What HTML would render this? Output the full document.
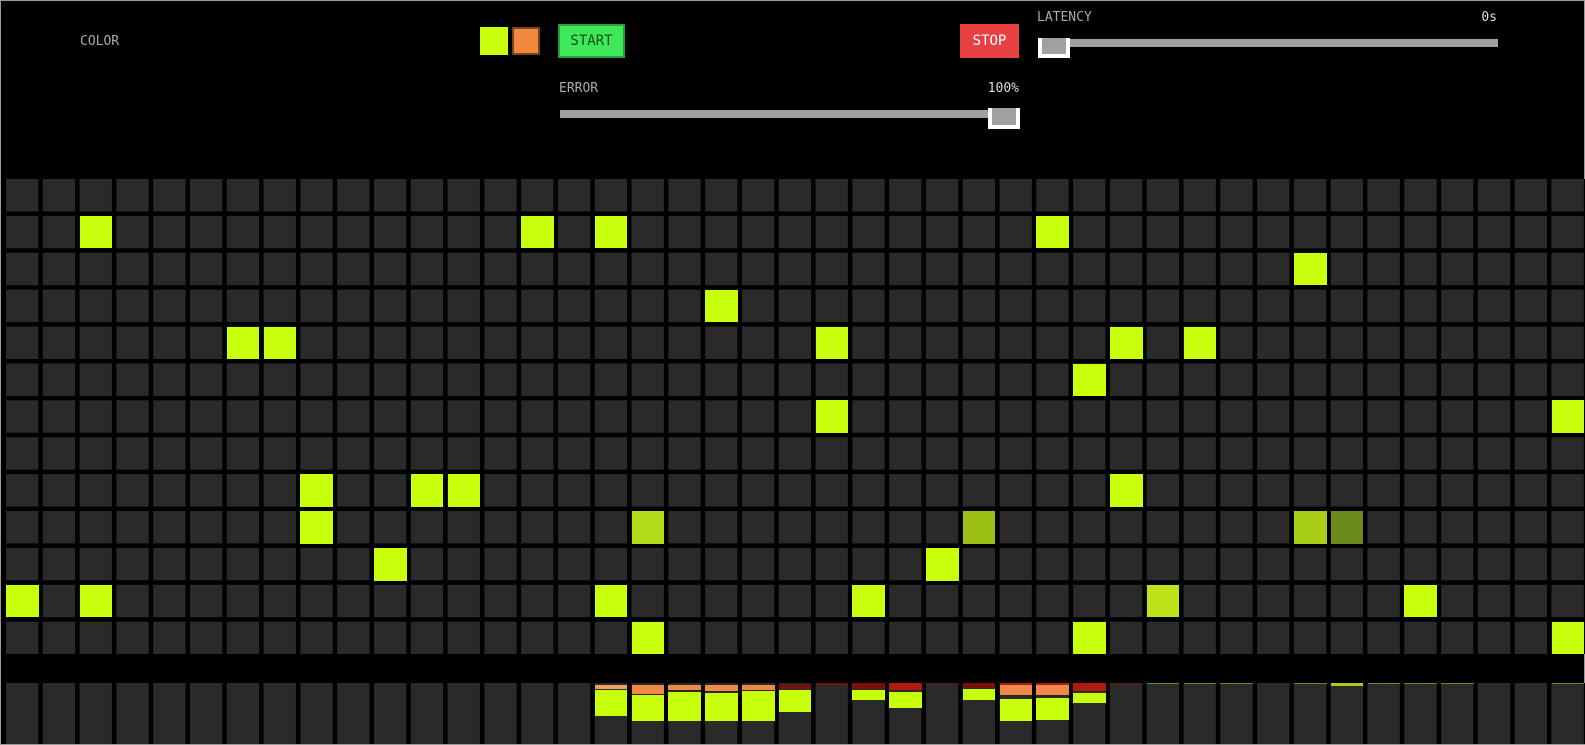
<!DOCTYPE html>
<html><head><meta charset="utf-8"><style>
*{margin:0;padding:0;box-sizing:border-box}
html,body{width:1585px;height:745px;background:#000;overflow:hidden}
body{position:relative;border:1px solid #9a9a9a;font-family:"DejaVu Sans Mono","Liberation Mono",monospace;font-size:13px;color:#aaa}
.t{position:absolute;line-height:14px}
.grid{position:absolute;left:5px;top:178px;width:1582px;height:475px;background-color:#2a2a2a;
background-image:linear-gradient(to right,transparent 32.5px,#000 32.5px),linear-gradient(to bottom,transparent 32.5px,#000 32.5px);
background-size:36.8px 100%,100% 36.9px}
.bars{position:absolute;left:5px;top:682px;width:1582px;height:61px;background-color:#2a2a2a;
background-image:linear-gradient(to right,transparent 32.5px,#000 32.5px);background-size:36.8px 100%}
.l{position:absolute;width:32.5px;height:32.5px;background:#c8ff0a;left:calc(5px + var(--c)*36.8px);top:calc(178px + var(--r)*36.9px)}
.b{position:absolute;width:32.5px;left:calc(5px + var(--c)*36.8px)}
.lm{background:#c8ff0a}.or{background:#f0884a}.ol{background:#f0a060}.dr{background:#7a1008}.rd{background:#b01a10}
</style></head><body>
<div class="t" style="left:79px;top:34px">COLOR</div>
<div style="position:absolute;left:479px;top:26px;width:28px;height:28px;background:#c8ff0a"></div>
<div style="position:absolute;left:511px;top:26px;width:28px;height:28px;background:#f0883e;border:2px solid #7a4020"></div>
<div style="position:absolute;left:557px;top:23px;width:67px;height:34px;background:#3ee85a;border:2px solid #27a040;color:#0d4d1a;text-align:center;line-height:30px;font-size:14px">START</div>
<div style="position:absolute;left:959px;top:23px;width:59px;height:34px;background:#e84040;color:#fff;text-align:center;line-height:34px;font-size:14px">STOP</div>
<div class="t" style="left:1036px;top:10px">LATENCY</div>
<div class="t" style="left:1455px;top:10px;width:41px;text-align:right;color:#ddd">0s</div>
<div style="position:absolute;left:1038px;top:38px;width:459px;height:8px;background:#a0a0a0"></div>
<div style="position:absolute;left:1037px;top:37px;width:32px;height:20px;border:4px solid #fff;border-top:none;background:#a0a0a0"></div>
<div class="t" style="left:558px;top:81px">ERROR</div>
<div class="t" style="left:960px;top:81px;width:58px;text-align:right;color:#ddd">100%</div>
<div style="position:absolute;left:559px;top:109px;width:455px;height:8px;background:#a0a0a0"></div>
<div style="position:absolute;left:987px;top:107px;width:32px;height:21px;border:4px solid #fff;border-top:none;background:#a0a0a0"></div>

<div class="grid"></div>
<div class="l" style="--c:2;--r:1"></div><div class="l" style="--c:14;--r:1"></div><div class="l" style="--c:16;--r:1"></div><div class="l" style="--c:28;--r:1"></div>
<div class="l" style="--c:35;--r:2"></div>
<div class="l" style="--c:19;--r:3"></div>
<div class="l" style="--c:6;--r:4"></div><div class="l" style="--c:7;--r:4"></div><div class="l" style="--c:22;--r:4"></div><div class="l" style="--c:30;--r:4"></div><div class="l" style="--c:32;--r:4"></div>
<div class="l" style="--c:29;--r:5"></div>
<div class="l" style="--c:22;--r:6"></div><div class="l" style="--c:42;--r:6"></div>
<div class="l" style="--c:8;--r:8"></div><div class="l" style="--c:11;--r:8"></div><div class="l" style="--c:12;--r:8"></div><div class="l" style="--c:30;--r:8"></div>
<div class="l" style="--c:8;--r:9"></div><div class="l" style="--c:17;--r:9;background:#b2d91a"></div><div class="l" style="--c:26;--r:9;background:#9cc016"></div><div class="l" style="--c:35;--r:9;background:#a8cf16"></div><div class="l" style="--c:36;--r:9;background:#6a8a1c"></div>
<div class="l" style="--c:10;--r:10"></div><div class="l" style="--c:25;--r:10"></div>
<div class="l" style="--c:0;--r:11"></div><div class="l" style="--c:2;--r:11"></div><div class="l" style="--c:16;--r:11"></div><div class="l" style="--c:23;--r:11"></div><div class="l" style="--c:31;--r:11;background:#bde41a"></div><div class="l" style="--c:38;--r:11"></div>
<div class="l" style="--c:17;--r:12"></div><div class="l" style="--c:29;--r:12"></div><div class="l" style="--c:42;--r:12"></div>

<div class="bars"></div>
<div class="b ol" style="--c:16;top:684px;height:4px"></div><div class="b lm" style="--c:16;top:689px;height:26px"></div>
<div class="b or" style="--c:17;top:684px;height:9px"></div><div class="b lm" style="--c:17;top:694px;height:26px"></div>
<div class="b or" style="--c:18;top:684px;height:5px"></div><div class="b lm" style="--c:18;top:691px;height:29px"></div>
<div class="b or" style="--c:19;top:684px;height:6px"></div><div class="b lm" style="--c:19;top:692px;height:28px"></div>
<div class="b or" style="--c:20;top:684px;height:5px"></div><div class="b lm" style="--c:20;top:690px;height:30px"></div>
<div class="b dr" style="--c:21;top:684px;height:4px"></div><div class="b lm" style="--c:21;top:689px;height:22px"></div>
<div class="b dr" style="--c:22;top:682px;height:2px"></div>
<div class="b dr" style="--c:23;top:682px;height:6px"></div><div class="b lm" style="--c:23;top:689px;height:10px"></div>
<div class="b rd" style="--c:24;top:682px;height:7px"></div><div class="b lm" style="--c:24;top:691px;height:16px"></div>
<div class="b dr" style="--c:25;top:682px;height:2px;opacity:.5"></div>
<div class="b dr" style="--c:26;top:682px;height:5px"></div><div class="b lm" style="--c:26;top:688px;height:11px"></div>
<div class="b rd" style="--c:27;top:682px;height:2px"></div><div class="b or" style="--c:27;top:684px;height:10px"></div><div class="b lm" style="--c:27;top:698px;height:22px"></div>
<div class="b rd" style="--c:28;top:682px;height:2px"></div><div class="b or" style="--c:28;top:684px;height:10px"></div><div class="b lm" style="--c:28;top:697px;height:22px"></div>
<div class="b rd" style="--c:29;top:682px;height:8px"></div><div class="b lm" style="--c:29;top:692px;height:10px"></div>
<div class="b dr" style="--c:30;top:682px;height:2px;opacity:.5"></div>
<div class="b" style="--c:31;top:682px;height:1px;background:#6a8a1c"></div>
<div class="b" style="--c:32;top:682px;height:1px;background:#6a8a1c"></div>
<div class="b" style="--c:33;top:682px;height:1px;background:#6a8a1c"></div>
<div class="b" style="--c:35;top:682px;height:1px;background:#6a8a1c"></div>
<div class="b" style="--c:36;top:682px;height:3px;background:#a8cf16"></div>
<div class="b" style="--c:37;top:682px;height:1px;background:#6a8a1c"></div>
<div class="b" style="--c:38;top:682px;height:1px;background:#6a8a1c"></div>
<div class="b" style="--c:39;top:682px;height:1px;background:#6a8a1c"></div>
<div class="b" style="--c:42;top:682px;height:1px;background:#6a8a1c"></div>
</body></html>
